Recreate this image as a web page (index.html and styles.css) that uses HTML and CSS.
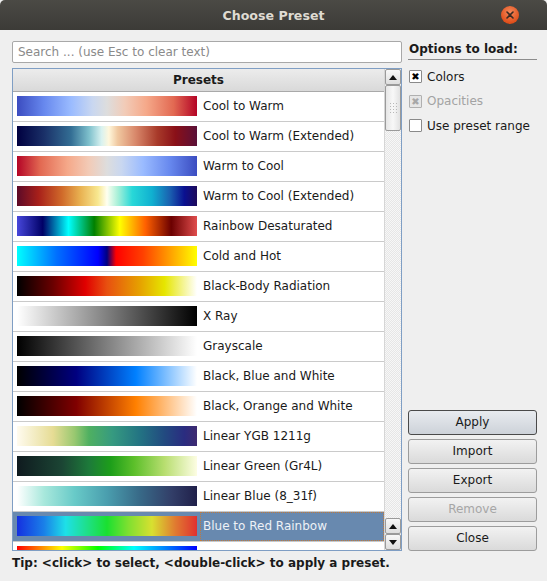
FILE: index.html
```html
<!DOCTYPE html>
<html>
<head>
<meta charset="utf-8">
<link rel="stylesheet" href="styles.css">
</head>
<body>
<div class="window">
  <div class="titlebar">
    <span class="title">Choose Preset</span>
    <span class="close"><svg width="8" height="8" viewBox="0 0 8 8"><path d="M1 1L7 7M7 1L1 7" stroke="#3a2a22" stroke-width="1.6" stroke-linecap="round"/></svg></span>
  </div>
  <div class="content">
    <div class="main">
      <div class="left">
        <div class="search">Search ... (use Esc to clear text)</div>
        <div class="table">
          <div class="table-main">
            <div class="thead">Presets</div>
            <div class="tbody">
              <div class="row"><div class="swatch g-cw"></div><div class="name">Cool to Warm</div></div>
              <div class="row"><div class="swatch g-cwe"></div><div class="name">Cool to Warm (Extended)</div></div>
              <div class="row"><div class="swatch g-wc"></div><div class="name">Warm to Cool</div></div>
              <div class="row"><div class="swatch g-wce"></div><div class="name">Warm to Cool (Extended)</div></div>
              <div class="row"><div class="swatch g-rd"></div><div class="name">Rainbow Desaturated</div></div>
              <div class="row"><div class="swatch g-ch"></div><div class="name">Cold and Hot</div></div>
              <div class="row"><div class="swatch g-bb"></div><div class="name">Black-Body Radiation</div></div>
              <div class="row"><div class="swatch g-xr"></div><div class="name">X Ray</div></div>
              <div class="row"><div class="swatch g-gs"></div><div class="name">Grayscale</div></div>
              <div class="row"><div class="swatch g-bbw"></div><div class="name">Black, Blue and White</div></div>
              <div class="row"><div class="swatch g-bow"></div><div class="name">Black, Orange and White</div></div>
              <div class="row"><div class="swatch g-ygb"></div><div class="name">Linear YGB 1211g</div></div>
              <div class="row"><div class="swatch g-lg"></div><div class="name">Linear Green (Gr4L)</div></div>
              <div class="row"><div class="swatch g-lb"></div><div class="name">Linear Blue (8_31f)</div></div>
              <div class="row selected"><div class="swatch g-btr"></div><div class="name focus">Blue to Red Rainbow</div></div>
              <div class="row"><div class="swatch g-ru"></div><div class="name"></div></div>
            </div>
          </div>
          <div class="vscroll">
            <div class="sbtn"><span class="tri-up"></span></div>
            <div class="thumb"><span class="grip"></span></div>
            <div class="track"></div>
            <div class="sbtn"><span class="tri-up"></span></div>
            <div class="sbtn"><span class="tri-down"></span></div>
          </div>
        </div>
      </div>
      <div class="right">
        <div class="opt-title">Options to load:</div>
        <div class="checks">
          <div class="check"><span class="box checked">✖</span><span>Colors</span></div>
          <div class="check disabled"><span class="box checked">✖</span><span>Opacities</span></div>
          <div class="check"><span class="box"></span><span>Use preset range</span></div>
        </div>
        <div class="buttons">
          <div class="btn default">Apply</div>
          <div class="btn">Import</div>
          <div class="btn">Export</div>
          <div class="btn disabled">Remove</div>
          <div class="btn">Close</div>
        </div>
      </div>
    </div>
    <div class="tip">Tip: &lt;click&gt; to select, &lt;double-click&gt; to apply a preset.</div>
  </div>
</div>
</body>
</html>
```
FILE: styles.css
```css
html, body {
  margin: 0;
  padding: 0;
  background: #efefef;
}
body {
  font-family: "DejaVu Sans", sans-serif;
  font-size: 12px;
  color: #1a1a1a;
}
.window {
  width: 547px;
  height: 581px;
  display: flex;
  flex-direction: column;
  background: #efefef;
}
.titlebar {
  height: 30px;
  flex: none;
  background: linear-gradient(#4b4a45, #3c3b37);
  border-radius: 5px 5px 0 0;
  display: flex;
  align-items: center;
  justify-content: center;
  position: relative;
}
.title {
  color: #dfdbd2;
  font-weight: bold;
  font-size: 12.6px;
  margin-top: 1px;
}
.close {
  position: absolute;
  left: 501px;
  top: 6px;
  width: 18px;
  height: 18px;
  border-radius: 50%;
  background: radial-gradient(circle at 50% 35%, #f58a5c, #e0501c 70%, #c8420f);
  display: flex;
  align-items: center;
  justify-content: center;
}
.content {
  flex: 1;
  display: flex;
  flex-direction: column;
  padding: 11px 10px 0 12px;
}
.main {
  display: flex;
  gap: 6px;
}
.left {
  width: 390px;
  display: flex;
  flex-direction: column;
  gap: 5px;
}
.search {
  height: 20px;
  border: 1px solid #a8a8a8;
  border-radius: 2px;
  background: #fff;
  color: #8a8a8a;
  padding-left: 5px;
  line-height: 20px;
}
.table {
  height: 481px;
  border: 1px solid #7f9ec4;
  display: flex;
  background: #fff;
}
.table-main {
  flex: 1;
  overflow: hidden;
  display: flex;
  flex-direction: column;
}
.thead {
  height: 22px;
  flex: none;
  border-bottom: 1px solid #a9a9a9;
  background: linear-gradient(#ececec, #d9d9d9);
  font-weight: bold;
  text-align: center;
  line-height: 22px;
}
.tbody {
  flex: 1;
  overflow: hidden;
}
.row {
  height: 29px;
  border-bottom: 1px solid #cacaca;
  display: flex;
  align-items: flex-start;
}
.swatch {
  width: 180px;
  height: 20px;
  margin: 4px 0 0 4px;
  flex: none;
}
.name {
  flex: 1;
  height: 29px;
  line-height: 29px;
  margin-left: 3px;
  padding-left: 3px;
  box-sizing: border-box;
}
.row.selected {
  background: #6889af;
}
.row.selected .name {
  color: #edf1f6;
}
.name.focus {
  border: 1px dotted #c07a3c;
  line-height: 27px;
  padding-left: 2px;
}
.vscroll {
  width: 16px;
  flex: none;
  display: flex;
  flex-direction: column;
  border-left: 1px solid #d6d6d6;
  background-color: #f7f7f7;
  background-image: linear-gradient(45deg, #e6e6e6 25%, transparent 25%, transparent 75%, #e6e6e6 75%), linear-gradient(45deg, #e6e6e6 25%, transparent 25%, transparent 75%, #e6e6e6 75%);
  background-size: 2px 2px;
  background-position: 0 0, 1px 1px;
}
.sbtn {
  height: 14px;
  border: 1px solid #9a9a9a;
  border-radius: 2px;
  background: linear-gradient(#f8f8f8, #dedede);
  display: flex;
  align-items: center;
  justify-content: center;
  flex: none;
}
.tri-up {
  width: 0;
  height: 0;
  border-left: 4px solid transparent;
  border-right: 4px solid transparent;
  border-bottom: 5px solid #111;
}
.tri-down {
  width: 0;
  height: 0;
  border-left: 4px solid transparent;
  border-right: 4px solid transparent;
  border-top: 5px solid #111;
}
.thumb {
  height: 44px;
  border: 1px solid #9a9a9a;
  border-radius: 2px;
  background: linear-gradient(90deg, #e6e6e6, #f8f8f8 50%, #e2e2e2);
  display: flex;
  align-items: center;
  justify-content: center;
  flex: none;
}
.grip {
  width: 9px;
  height: 13px;
  background-image: radial-gradient(circle, #b8b8b8 0.8px, transparent 1px);
  background-size: 3px 3px;
}
.track {
  flex: 1;
}
.right {
  width: 129px;
  display: flex;
  flex-direction: column;
}
.opt-title {
  font-weight: bold;
  padding: 1px 0 3px 1px;
  height: 14px;
  border-bottom: 1px solid #8c8c8c;
  margin-bottom: 10px;
}
.checks {
  display: flex;
  flex-direction: column;
  gap: 11.5px;
  padding-left: 1px;
}
.check {
  display: flex;
  align-items: center;
  gap: 5px;
  height: 13px;
}
.box {
  width: 11px;
  height: 11px;
  border: 1px solid #8a8a8a;
  background: #fff;
  border-radius: 1px;
  font-size: 10px;
  line-height: 11px;
  text-align: center;
  color: #000;
  font-weight: bold;
}
.check.disabled {
  color: #a3a3a3;
}
.check.disabled .box {
  background: #e6e6e6;
  color: #a8a8a8;
  border-color: #b0b0b0;
}
.buttons {
  margin-top: auto;
  display: flex;
  flex-direction: column;
  gap: 4px;
}
.btn {
  height: 23px;
  border: 1px solid #9c9c9c;
  border-radius: 3px;
  background: linear-gradient(#f2f2f2, #dadada);
  text-align: center;
  line-height: 23px;
}
.btn.default {
  border-color: #4a4a4a;
  background: linear-gradient(#e8ebef, #cdd2d9);
}
.btn.disabled {
  color: #a6a6a6;
}
.tip {
  font-weight: bold;
  margin-top: 5px;
  line-height: 14px;
}

.g-cw { background: linear-gradient(90deg, #3b4cc0, #6788ee 15%, #9abbff 30%, #c9d7f0 42%, #dddddd 50%, #f2cbb7 60%, #f5a889 72%, #e26952 87%, #b40426); }
.g-wc { background: linear-gradient(90deg, #b40426, #e26952 13%, #f5a889 28%, #f2cbb7 40%, #dddddd 50%, #c9d7f0 58%, #9abbff 70%, #6788ee 85%, #3b4cc0); }
.g-cwe { background: linear-gradient(90deg, #000040, #1a3068 15%, #336e94 30%, #7ec0cc 40%, #d9f2f0 47%, #fff7dc 51%, #f0c8a0 56%, #d8876a 66%, #a83a2a 78%, #8a1018 88%, #5a1038); }
.g-wce { background: linear-gradient(90deg, #5c0a28, #a8201a 12%, #d06a2a 25%, #e8b050 35%, #f8e890 45%, #fffff0 50%, #a8f0d8 56%, #28d8d8 64%, #10b0d0 75%, #1a60b0 85%, #0a1090 93%, #1e0a5a); }
.g-rd { background: linear-gradient(90deg, #4747db, #000066 14.3%, #00ffff 28.6%, #008000 42.9%, #ffff00 57.1%, #ff6000 71.4%, #6b0000 85.7%, #e04d4d); }
.g-ch { background: linear-gradient(90deg, #00ffff, #0070ff 22%, #0000ff 45%, #000080 50%, #ff0000 55%, #ff4000 70%, #ffff00); }
.g-bb { background: linear-gradient(90deg, #000000, #6a0000 20%, #e00000 38%, #e85010 50%, #e6a000 68%, #e6e600 82%, #ffffff); }
.g-xr { background: linear-gradient(90deg, #ffffff, #000000); }
.g-gs { background: linear-gradient(90deg, #000000, #ffffff); }
.g-bbw { background: linear-gradient(90deg, #000000, #000080 33%, #0080ff 66%, #ffffff); }
.g-bow { background: linear-gradient(90deg, #000000, #800000 33%, #ff8000 66%, #ffffff); }
.g-ygb { background: linear-gradient(90deg, #fffbef, #e6dc94 20%, #98c870 32%, #4fb061 40%, #369a80 53%, #237483 68%, #224a80 82%, #2a2c80 93%, #3e2a70); }
.g-lg { background: linear-gradient(90deg, #0f1a1f, #1b4534 25%, #1d7a3a 40%, #1d9e1a 52%, #5cbf2a 65%, #b8de70 82%, #fdfde3); }
.g-lb { background: linear-gradient(90deg, #ffffff, #a8e8dc 15%, #68cac8 32%, #4a9eae 50%, #386a88 68%, #323e68 86%, #20204a); }
.g-btr { background: linear-gradient(90deg, #1530e0, #1a80e8 15%, #1ee0e8 27%, #1ee080 40%, #1ae030 50%, #80e030 62%, #d8e030 75%, #e07a30 88%, #e03030); }
.g-ru { background: linear-gradient(90deg, #ff0000, #ffff00 25%, #00ff00 45%, #00ffff 65%, #0000ff); }
```
